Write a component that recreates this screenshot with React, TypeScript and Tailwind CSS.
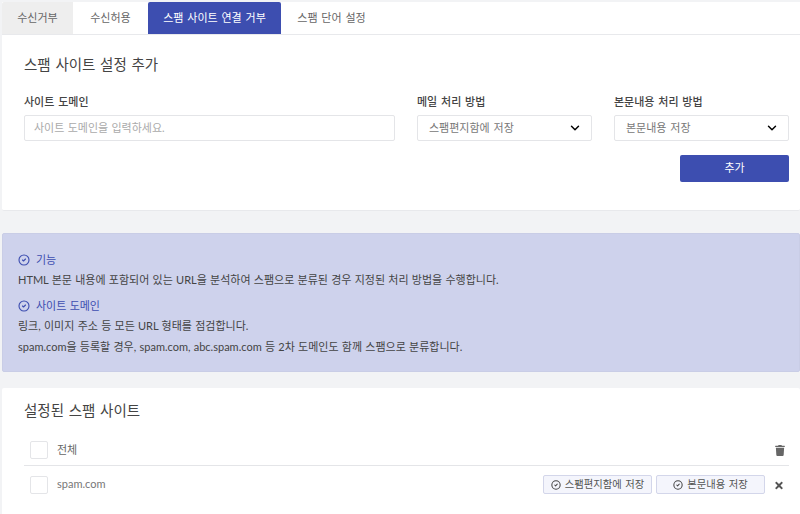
import { ChevronDown, CircleCheck } from "lucide-react";
import { FaTimes, FaTrash } from "react-icons/fa";

const font = "font-['Lato','Noto_Sans_CJK_KR','Noto_Sans',sans-serif]";

function Tabs() {
  return (
    <div className="flex h-[32px] bg-white text-[11px] text-[#666] ml-[2px] [word-spacing:1px]">
      <div className="w-[71px] bg-[#eeeeee] flex items-center justify-center rounded-tl-[2px]">수신거부</div>
      <div className="w-[75px] flex items-center justify-center">수신허용</div>
      <div className="w-[133px] bg-[#3d4eb0] text-white flex items-center justify-center rounded-t-[2px]">스팸 사이트 연결 거부</div>
      <div className="w-[101px] flex items-center justify-center">스팸 단어 설정</div>
    </div>
  );
}

function SelectBox({ label, value }: { label: string; value: string }) {
  return (
    <div className="w-[175px]">
      <div className="text-[11px] font-medium text-[#444] h-[15px] leading-[15px] mb-[6px]">{label}</div>
      <div className="h-[26px] bg-white border border-[#e4e5e8] rounded-[2px] flex items-center justify-between pl-[11px] pr-[9px] text-[11px] text-[#777]">
        <span>{value}</span>
        <ChevronDown className="w-[14px] h-[14px] text-black" strokeWidth={2.5} />
      </div>
    </div>
  );
}

function Tag({ text }: { text: string }) {
  return (
    <div className="w-[109px] h-[19px] bg-[#f4f5fc] border border-[#d3d6ea] rounded-[2px] flex items-center justify-center gap-[4px] text-[10.3px] text-[#555]">
      <CircleCheck className="w-[10px] h-[10px] text-[#444]" strokeWidth={2.5} />
      <span>{text}</span>
    </div>
  );
}

export default function App() {
  return (
    <div className={`${font} w-[800px] h-[514px] overflow-hidden bg-[#f2f3f5] pt-[2px] [word-spacing:1px]`}>
      <Tabs />

      {/* 스팸 사이트 설정 추가 */}
      <section className="ml-[2px] h-[177px] bg-white border-t border-[#e8e9ec] border-b rounded-b-[2px] pl-[22px] pr-[11px] pt-[20px]">
        <h2 className="text-[14.5px] leading-[20px] text-[#444] mb-[19px]">스팸 사이트 설정 추가</h2>
        <div className="flex gap-[22px]">
          <div className="w-[371px]">
            <div className="text-[11px] font-medium text-[#444] h-[15px] leading-[15px] mb-[6px]">사이트 도메인</div>
            <div className="h-[26px] bg-white border border-[#e4e5e8] rounded-[2px] flex items-center pl-[9px] text-[11px] text-[#aaa] [word-spacing:0.5px]">
              사이트 도메인을 입력하세요.
            </div>
          </div>
          <SelectBox label="메일 처리 방법" value="스팸편지함에 저장" />
          <SelectBox label="본문내용 처리 방법" value="본문내용 저장" />
        </div>
        <div className="flex justify-end mt-[14px]">
          <button className="w-[109px] h-[27px] bg-[#3d4eb0] text-white text-[11px] rounded-[2px]">추가</button>
        </div>
      </section>

      {/* 안내 */}
      <section className="ml-[2px] mt-[22px] h-[139px] bg-[#ced2ec] border border-[#c9cde6] rounded-[2px] pl-[15px] pt-[18px] text-[11px] text-[#444] [word-spacing:0.45px]">
        <div className="flex items-center gap-[6px] h-[16px] text-[#3d4eb0]">
          <CircleCheck className="w-[12px] h-[12px]" strokeWidth={2.25} />
          <span>기능</span>
        </div>
        <p className="leading-[16px] mt-[4px]">HTML 본문 내용에 포함되어 있는 URL을 분석하여 스팸으로 분류된 경우 지정된 처리 방법을 수행합니다.</p>
        <div className="flex items-center gap-[6px] h-[16px] text-[#3d4eb0] mt-[10px]">
          <CircleCheck className="w-[12px] h-[12px]" strokeWidth={2.25} />
          <span>사이트 도메인</span>
        </div>
        <p className="leading-[16px] mt-[4px]">링크, 이미지 주소 등 모든 URL 형태를 점검합니다.</p>
        <p className="leading-[16px] mt-[5px]">spam.com을 등록할 경우, spam.com, abc.spam.com 등 2차 도메인도 함께 스팸으로 분류합니다.</p>
      </section>

      {/* 설정된 스팸 사이트 */}
      <section className="ml-[2px] mt-[16px] h-[126px] bg-white rounded-t-[2px] pl-[22px] pr-[11px] pt-[13px]">
        <h2 className="text-[14.5px] leading-[20px] text-[#444] mb-[12px]">설정된 스팸 사이트</h2>
        <div className="flex items-center h-[33px] border-b border-[#e4e5e8] pt-[2px] pl-[6px] pr-[4px]">
          <div className="w-[18px] h-[18px] bg-white border border-[#e4e5e8] rounded-[2px]" />
          <span className="ml-[9px] text-[11px] text-[#666]">전체</span>
          <FaTrash className="ml-auto w-[10px] h-[11px] text-[#666]" />
        </div>
        <div className="flex items-center h-[37px] pl-[6px] pr-[5px]">
          <div className="w-[18px] h-[18px] bg-white border border-[#e4e5e8] rounded-[2px]" />
          <span className="ml-[9px] text-[11px] text-[#777]">spam.com</span>
          <div className="ml-auto flex items-center gap-[4px] mr-[9px]">
            <Tag text="스팸편지함에 저장" />
            <Tag text="본문내용 저장" />
          </div>
          <FaTimes className="w-[10px] h-[11px] mt-[2px] text-[#555]" />
        </div>
      </section>
    </div>
  );
}
